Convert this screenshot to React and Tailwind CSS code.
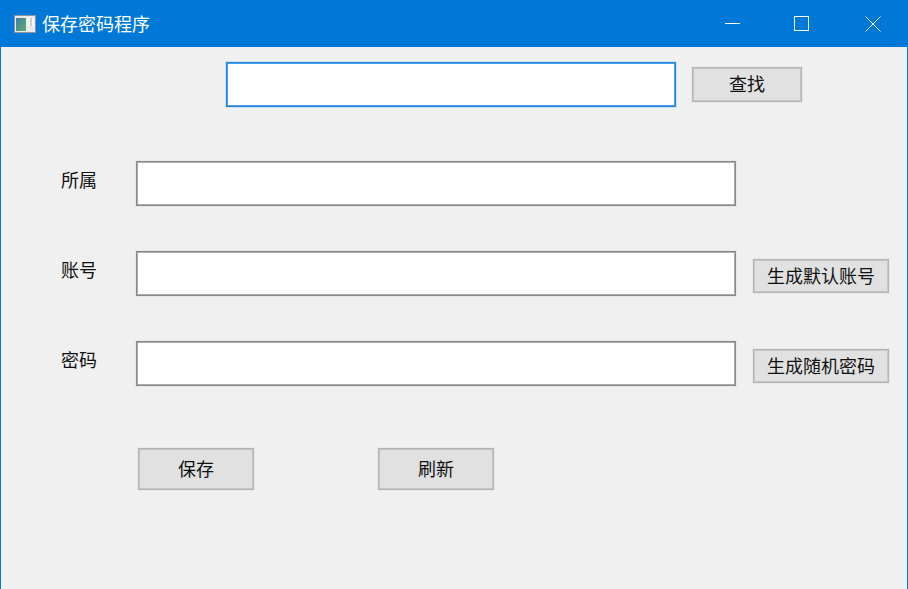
const FONT = "font-['Noto_Sans_CJK_SC','Liberation_Sans',sans-serif]"

function AppIcon() {
  return (
    <svg width="22" height="18" viewBox="0 0 22 18" className="shrink-0">
      <rect x="0.5" y="0.5" width="21" height="17" fill="#e9e9e9" stroke="#8a94a3" />
      <defs>
        <linearGradient id="pane" x1="0" y1="0" x2="1" y2="1">
          <stop offset="0" stopColor="#3e7fa0" />
          <stop offset="1" stopColor="#5fae74" />
        </linearGradient>
      </defs>
      <rect x="2" y="3" width="10" height="13" fill="url(#pane)" />
      <rect x="13" y="3" width="3" height="8" fill="#f4f4f4" />
      <rect x="18" y="3" width="2" height="8" fill="#f7f7f7" />
      <rect x="16" y="3" width="2" height="8" fill="#c9cdd0" />
    </svg>
  )
}

function TitleBar() {
  return (
    <div className="flex h-[46px] items-center bg-[#0078d7] pl-[13px] text-white">
      <AppIcon />
      <span className="ml-[6px] -mt-[2px] text-[18px] leading-none">保存密码程序</span>
      <div className="ml-auto flex items-center">
        <svg width="16" height="16" viewBox="0 0 16 16" className="mr-[53px]">
          <path d="M0 7.5H15" stroke="#fff" strokeWidth="1" />
        </svg>
        <svg width="16" height="16" viewBox="0 0 16 16" className="mr-[55px]">
          <rect x="0.5" y="0.5" width="14" height="14" fill="none" stroke="#fff" strokeWidth="1" />
        </svg>
        <svg width="16" height="16" viewBox="0 0 16 16" className="mr-[26px]">
          <path d="M0.5 0.5L15.5 15.5M15.5 0.5L0.5 15.5" stroke="#fff" strokeWidth="1" />
        </svg>
      </div>
    </div>
  )
}

function Btn({ className, children }) {
  return (
    <button className={`flex shrink-0 items-center justify-center border border-[#b4b4b4] bg-[#e1e1e1] pb-[3px] text-[18px] leading-none text-[#111111] shadow-[inset_0_0_0_1px_#c6c6c6,0_0_0_1px_rgba(0,0,0,0.03)] ${className}`}>
      {children}
    </button>
  )
}

function Field({ label, action }) {
  return (
    <div className="flex h-[45px] items-start">
      <label className="flex h-[35px] w-[136px] shrink-0 items-center pl-[61px] text-[18px] leading-none whitespace-nowrap text-[#111111]">
        {label}
      </label>
      <input className="h-[45px] w-[600px] shrink-0 border border-[#8a8a8a] bg-white shadow-[inset_0_0_0_1px_#acacac,0_0_0_1px_rgba(0,0,0,0.04)] outline-none" />
      {action && <Btn className="ml-[17px] mt-[8px] h-[34px] w-[136px]">{action}</Btn>}
    </div>
  )
}

export default function App() {
  return (
    <div className={`flex h-[589px] w-[908px] flex-col overflow-hidden border-x border-t border-[#0078d7] bg-[#f0f0f0] ${FONT}`}>
      <TitleBar />

      <div className="flex flex-col pt-[15px]">
        {/* search */}
        <div className="flex items-center pl-[225px]">
          <input className="h-[45px] w-[450px] border border-[#1f86df] bg-white shadow-[inset_0_0_0_1px_#4a9de6,0_0_0_1px_rgba(0,120,215,0.12)] outline-none" />
          <Btn className="ml-[16px] h-[35px] w-[110px]">查找</Btn>
        </div>

        <div className="-ml-px mt-[54px] flex flex-col gap-[45px]">
          <Field label="所属" />
          <Field label="账号" action="生成默认账号" />
          <Field label="密码" action="生成随机密码" />
        </div>

        <div className="mt-[62px] flex gap-[124px] pl-[137px]">
          <Btn className="h-[42px] w-[116px]">保存</Btn>
          <Btn className="h-[42px] w-[116px]">刷新</Btn>
        </div>
      </div>
    </div>
  )
}
